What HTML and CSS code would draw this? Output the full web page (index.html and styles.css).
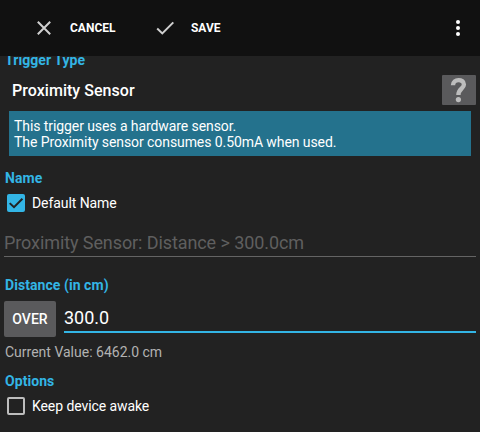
FILE: index.html
```html
<!DOCTYPE html>
<html lang="en">
<head>
<meta charset="utf-8">
<title>Proximity Sensor</title>
<link rel="stylesheet" href="styles.css">
</head>
<body>
<header class="toolbar">
  <button class="action cancel">
    <svg width="24" height="24" viewBox="0 0 24 24"><path d="M5.8 5.8 18.2 18.2M18.2 5.8 5.8 18.2"/></svg>
    <span>CANCEL</span>
  </button>
  <button class="action save">
    <svg width="24" height="24" viewBox="0 0 24 24"><path d="M4.2 12.5 9.3 17.4 20.3 6.4"/></svg>
    <span>SAVE</span>
  </button>
  <button class="more"><svg width="6" height="16" viewBox="0 0 6 16"><circle cx="3" cy="2" r="2"/><circle cx="3" cy="8" r="2"/><circle cx="3" cy="14" r="2"/></svg></button>
</header>
<main class="content">
  <section class="trigger">
    <h2>Trigger Type</h2>
    <div class="type-row">
      <span class="type-name">Proximity Sensor</span>
      <button class="help"><svg width="34" height="30" viewBox="0 0 34 30"><path d="M11 10.3C11 3.6 21.9 3.6 21.9 9.4C21.9 13.6 16.4 14 16.4 19.9"/><circle cx="16.4" cy="24.6" r="2.6"/></svg></button>
    </div>
    <p class="info">This trigger uses a hardware sensor.<br>The Proximity sensor consumes 0.50mA when used.</p>
  </section>
  <section class="name">
    <h2>Name</h2>
    <label class="check-row">
      <span class="box checked"><svg width="18" height="18" viewBox="0 0 18 18"><path d="M2.7 9.1 7 13.2 15.4 4.7"/></svg></span>
      <span>Default Name</span>
    </label>
    <div class="field disabled">Proximity Sensor: Distance &gt; 300.0cm</div>
  </section>
  <section class="distance">
    <h2>Distance (in cm)</h2>
    <div class="distance-row">
      <button class="over">OVER</button>
      <div class="field active">300.0</div>
    </div>
    <p class="current">Current Value: 6462.0 cm</p>
  </section>
  <section class="options">
    <h2>Options</h2>
    <label class="check-row">
      <span class="box"></span>
      <span>Keep device awake</span>
    </label>
  </section>
</main>
</body>
</html>
```
FILE: styles.css
```css
* { box-sizing: border-box; margin: 0; padding: 0; }
body {
  width: 480px;
  height: 432px;
  overflow: hidden;
  display: flex;
  flex-direction: column;
  background: #222;
  color: #fff;
  font: 14px/16px Roboto, sans-serif;
}
button { border: 0; background: none; color: inherit; font: inherit; }
svg { display: block; }
.toolbar {
  flex: none;
  height: 56px;
  display: flex;
  align-items: center;
  background: #111;
  padding-left: 32px;
}
.action {
  display: flex;
  align-items: center;
  gap: 14px;
  font-size: 12px;
  font-weight: 700;
}
.action svg { fill: none; stroke: #d0d0d0; stroke-width: 2; }
.save { margin-left: 37.5px; }
.more { margin-left: auto; margin-right: 19px; }
.more svg { fill: #fff; }
.content { flex: 1; overflow: hidden; padding: 0 4px; }
h2 { padding-left: 1px; font-size: 14px; line-height: 16px; font-weight: 700; letter-spacing: 0.06px; color: #33b5e5; }
.trigger { margin-top: -4px; }
.type-row {
  display: flex;
  align-items: center;
  justify-content: space-between;
  height: 30px;
  margin-top: 7px;
  padding-left: 8px;
}
.type-name { padding-top: 2px; font-size: 16px; font-weight: 500; letter-spacing: 0.04px; }
.help { width: 34px; height: 30px; border-radius: 1px; background: #5a5a5c; }
.help path { fill: none; stroke: #bdbdbd; stroke-width: 4.4; }
.help circle { fill: #bdbdbd; }
.info { height: 45px; margin: 6px 5px 0; padding: 7px 5px 6px; background: #24728d; letter-spacing: -0.08px; }
.name { margin-top: 14px; }
.check-row { display: flex; align-items: center; gap: 7px; height: 18px; margin-top: 8px; padding-left: 3px; letter-spacing: -0.08px; }
.box { width: 18px; height: 18px; border: 2px solid #bdbdbd; border-radius: 2px; }
.checked { border: 0; background: #33b5e5; }
.checked path { fill: none; stroke: #222; stroke-width: 2; }
.field { font-size: 18px; line-height: 22px; }
.disabled { height: 25px; margin-top: 20px; color: #5f5f5f; border-bottom: 1px solid #646464; letter-spacing: -0.09px; }
.distance { margin-top: 20px; }
.distance-row { display: flex; gap: 8px; height: 36px; margin-top: 8px; }
.over { width: 52px; height: 36px; border-radius: 2px; background: #5a5a5c; font-weight: 500; }
.active { flex: 1; height: 32px; padding-top: 6px; border-bottom: 2px solid #33b5e5; }
.current { margin-top: 7px; padding-left: 1px; color: #b2b2b2; }
.options { margin-top: 13px; }
```
